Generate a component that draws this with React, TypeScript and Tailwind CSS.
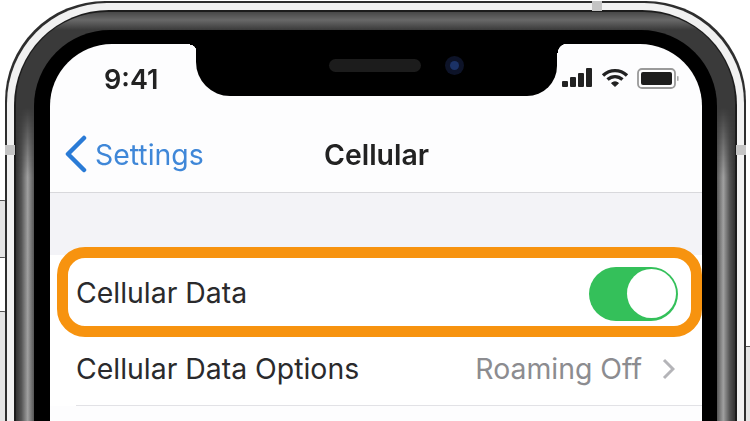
const font = { fontFamily: "Inter, 'Liberation Sans', sans-serif" };

function SignalIcon() {
  return (
    <svg width="31" height="20" viewBox="0 0 31 20" fill="#222">
      <rect x="0" y="13" width="6" height="6" rx="1" />
      <rect x="8" y="9" width="6" height="10" rx="1" />
      <rect x="16" y="5" width="6" height="14" rx="1" />
      <rect x="24" y="0" width="6" height="19" rx="1" />
    </svg>
  );
}

function WifiIcon() {
  return (
    <svg width="28" height="20" viewBox="0 0 28 20" fill="none" stroke="#222" strokeWidth="3.4">
      <path d="M2 7.5C9 1 19 1 26 7.5" />
      <path d="M6.5 11.5C11 7.6 17 7.6 21.5 11.5" />
      <path d="M10.5 15.2L14 18.4L17.5 15.2C15.5 13.4 12.5 13.4 10.5 15.2Z" fill="#222" strokeWidth="1" />
    </svg>
  );
}

function BatteryIcon() {
  return (
    <svg width="42" height="22" viewBox="0 0 42 22" fill="none">
      <rect x="1" y="1" width="37" height="19" rx="4" stroke="#9a9a9a" strokeWidth="1.8" />
      <rect x="4" y="4" width="31" height="13" rx="2" fill="#1d1d1d" />
      <rect x="40" y="8" width="1.6" height="5" rx="0.8" fill="#a8a8a8" />
    </svg>
  );
}

function Screen() {
  return (
    <div className="relative h-[400px] w-full overflow-hidden rounded-t-[62px] bg-[#fdfdfe]" style={font}>
      {/* notch */}
      <div className="absolute left-[146px] top-0 h-[52px] w-[361px] rounded-bl-[34px] rounded-br-[30px] bg-black">
        <div className="absolute left-[-6px] top-0 h-[7px] w-[6px] bg-[radial-gradient(circle_at_0_100%,transparent_6px,black_6.5px)]" />
        <div className="absolute right-[-10px] top-0 h-[9px] w-[10px] bg-[radial-gradient(circle_at_100%_100%,transparent_9px,black_9.5px)]" />
        <div className="ml-[133px] mt-[12px] flex items-center gap-[24px]">
          <div className="h-[13px] w-[92px] rounded-full bg-[#1c1c1c]" />
          <div className="flex h-[19px] w-[19px] items-center justify-center rounded-full bg-[#0d1328]">
            <div className="h-[9px] w-[9px] rounded-full bg-[#1b3266]" />
          </div>
        </div>
      </div>

      <div className="flex h-[72px] items-start justify-between pl-[54px] pr-[23px] pt-[20px]">
        <span className="text-[27px] font-semibold leading-[32px] text-[#222]">9:41</span>
        <div className="mt-[4px] flex items-start gap-[8px]">
          <SignalIcon />
          <WifiIcon />
          <BatteryIcon />
        </div>
      </div>

      <div className="relative flex h-[77px] items-center border-b border-[#d8d8dc] pl-[14px]">
        <svg width="24" height="38" viewBox="0 0 24 38" fill="none" stroke="#2a7bd6" strokeWidth="4.5" strokeLinecap="round" strokeLinejoin="round">
          <path d="M20 3L4 19L20 35" />
        </svg>
        <span className="ml-[7px] mt-[2px] text-[28.4px] leading-none text-[#3f87d8]">Settings</span>
        <span className="absolute left-[274px] top-[23px] text-[28.4px] font-semibold leading-[32px] text-[#222]">Cellular</span>
      </div>

      <div className="h-[62px] bg-[#f3f3f7]" />

      <div className="relative bg-white">
        <div className="flex h-[77px] items-center justify-between pl-[26px] pr-[24px]">
          <span className="text-[28.4px] leading-none text-[#2a2a2c]">Cellular Data</span>
          <div className="flex h-[54px] w-[89px] items-center justify-end rounded-full bg-[#34c05a] pr-[2px]">
            <div className="h-[49px] w-[49px] rounded-full bg-white" />
          </div>
        </div>
        <div className="absolute left-[7px] top-[-8px] h-[90px] w-[645px] rounded-[28px] border-[11px] border-[#f7930f]" />
        <div className="ml-[26px] flex h-[74px] items-center justify-between border-b border-[#e2e2e6] pr-[27px]">
          <span className="mt-[2px] text-[28.4px] leading-none text-[#2a2a2c]">Cellular Data Options</span>
          <div className="flex items-center gap-[20px]">
            <span className="mt-[2px] text-[28.4px] leading-none text-[#8c8c90]">Roaming Off</span>
            <svg width="13" height="22" viewBox="0 0 13 22" fill="none" stroke="#b4b4b8" strokeWidth="3">
              <path d="M2 2L11 11L2 20" />
            </svg>
          </div>
        </div>
      </div>
    </div>
  );
}

export default function App() {
  return (
    <div className="relative h-[421px] w-[750px] overflow-hidden bg-white">
      <div className="h-full blur-[0.5px]">
        {/* side buttons */}
        <div className="absolute left-[-2px] top-[200px] h-[58px] w-[8px] rounded-r-[2px] border-y border-r border-[#555] bg-[#e4e4e4]" />
        <div className="absolute left-[-2px] top-[311px] h-[120px] w-[8px] rounded-r-[2px] border-y border-r border-[#555] bg-[#e4e4e4]" />
        <div className="absolute right-[-2px] top-[346px] h-[90px] w-[7px] border-y border-l border-[#555] bg-[#e4e4e4]" />

        <div className="ml-[5px] pt-[1px]">
          {/* outer edge */}
          <div className="relative h-[500px] w-[741px] rounded-t-[100px] bg-[#2e2e2e] px-[2px] pt-[2px]">
            {/* polished steel band */}
            <div className="h-full rounded-t-[100px] bg-[#f1f1f1] px-[7px] pt-[7px]">
              <div className="h-full rounded-t-[95px] bg-[#1c1c1c] px-[2px] pt-[2px]">
                <div className="relative h-full rounded-t-[91px] bg-[linear-gradient(180deg,#484848_0,#686868_8px,#3a3a3a_18px)] px-[18px] pt-[18px]">
                  {/* brighter brushed sides, fading in below the corners */}
                  <div className="absolute bottom-0 left-0 top-[95px] w-[18px] bg-[linear-gradient(90deg,#333,#555_30%,#a0a0a0_65%,#555)] [mask-image:linear-gradient(180deg,transparent,black_70px)]" />
                  <div className="absolute bottom-0 right-0 top-[95px] w-[18px] bg-[linear-gradient(270deg,#333,#555_30%,#a0a0a0_65%,#555)] [mask-image:linear-gradient(180deg,transparent,black_70px)]" />
                  <div className="relative h-full rounded-t-[76px] bg-black pl-[16px] pr-[15px] pt-[14px]">
                    <Screen />
                  </div>
                </div>
              </div>
            </div>
            {/* antenna lines */}
            <div className="absolute left-0 top-[144px] h-[10px] w-[10px] bg-[#c4c4c4]" />
            <div className="absolute right-0 top-[144px] h-[10px] w-[10px] bg-[#c4c4c4]" />
            <div className="absolute left-[587px] top-0 h-[10px] w-[10px] bg-[#c4c4c4]" />
          </div>
        </div>
      </div>
    </div>
  );
}
